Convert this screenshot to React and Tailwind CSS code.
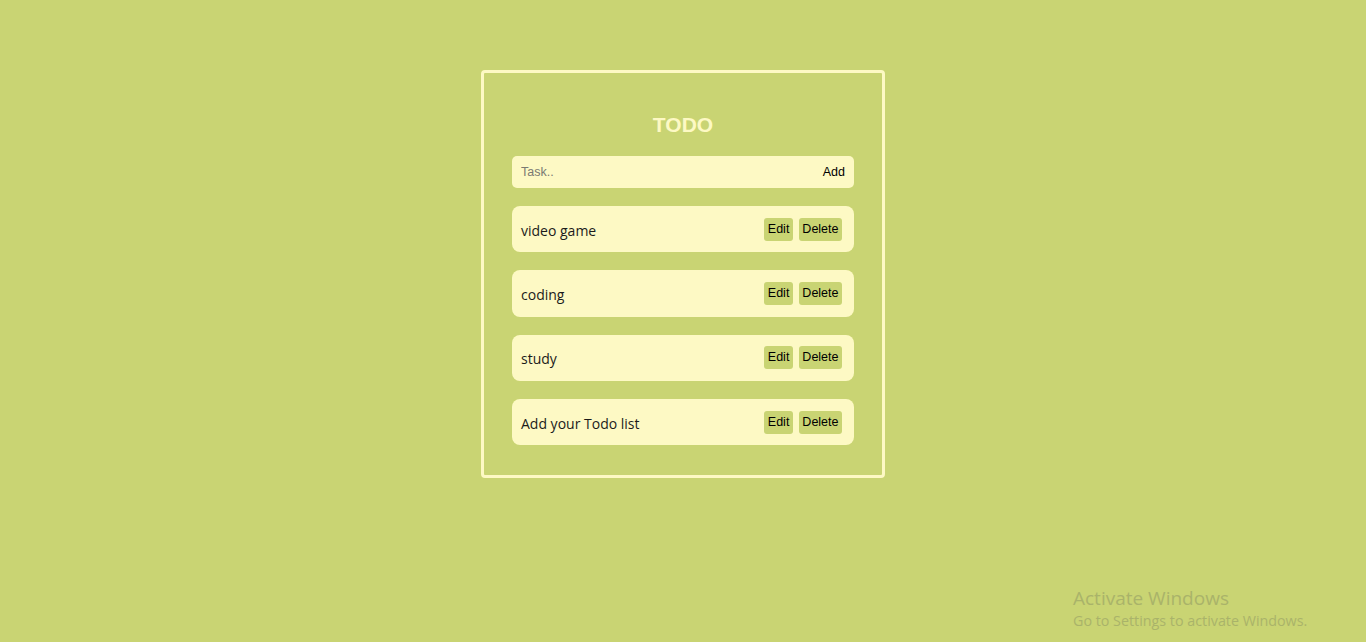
import { useState } from "react";

const initialTodos = ["video game", "coding", "study", "Add your Todo list"];

export default function App() {
  const [todos, setTodos] = useState(initialTodos);
  const [task, setTask] = useState("");

  const addTask = () => {
    if (!task.trim()) return;
    setTodos([...todos, task.trim()]);
    setTask("");
  };

  return (
    <div className="min-h-[642px] w-full bg-[#c9d473] font-['Liberation_Sans',Arial,sans-serif] relative">
      <div className="flex justify-center pt-[70px]">
        {/* Card */}
        <div className="w-[404px] border-[3px] border-[#fdf9c4] rounded-[4px] px-[28px] pt-[37px] pb-[30px]">
          <h1 className="text-center text-[21px] font-bold text-[#fdf9c4] leading-[30px]">TODO</h1>

          <div className="mt-[16px] flex items-center h-[32px] bg-[#fdf9c4] rounded-[5px] pl-[9px] pr-[9px]">
            <input
              type="text"
              placeholder="Task.."
              value={task}
              onChange={(e) => setTask(e.target.value)}
              className="flex-1 bg-transparent outline-none text-[12.5px] text-gray-900 placeholder-[#7a7a72]"
            />
            <button onClick={addTask} className="text-[12.5px] text-black">
              Add
            </button>
          </div>

          <div className="mt-[18px] flex flex-col gap-[18px]">
            {todos.map((t, i) => (
              <div
                key={i}
                className="flex items-center justify-between h-[46.33px] bg-[#fdf9c4] rounded-[8px] pl-[9px] pr-[12px]"
              >
                <span className="text-[14px] text-[#1b1b1b] font-['Open_Sans','Noto_Sans',sans-serif] pt-[2px]">
                  {t}
                </span>
                <div className="flex gap-[6px]">
                  <button className="h-[23px] px-[3.5px] bg-[#c9d473] rounded-[3px] text-[12.5px] text-black">
                    Edit
                  </button>
                  <button
                    onClick={() => setTodos(todos.filter((_, j) => j !== i))}
                    className="h-[23px] px-[3.5px] bg-[#c9d473] rounded-[3px] text-[12.5px] text-black"
                  >
                    Delete
                  </button>
                </div>
              </div>
            ))}
          </div>
        </div>
      </div>

      {/* Windows watermark */}
      <div className="absolute left-[1073px] top-[586px] text-[#a9b36a] font-['Open_Sans','Noto_Sans',sans-serif] pointer-events-none">
        <div className="text-[19px] leading-[24px]">Activate Windows</div>
        <div className="text-[14.3px] leading-[20px] mt-[1px]">Go to Settings to activate Windows.</div>
      </div>
    </div>
  );
}
